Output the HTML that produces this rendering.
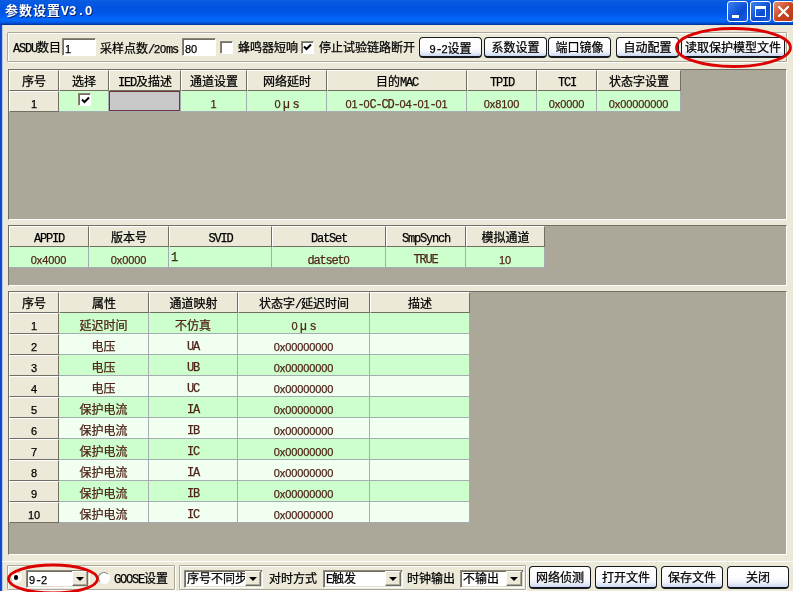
<!DOCTYPE html><html><head><meta charset="utf-8"><title>参数设置V3.0</title><style>
*{box-sizing:border-box;margin:0;padding:0}
html,body{width:793px;height:592px;overflow:hidden;background:#ECE9D8}
body{position:relative;font-family:"Liberation Mono","Noto Sans CJK SC",monospace;font-size:12px;line-height:14px;color:#000;-webkit-text-stroke:0.25px}
.l{letter-spacing:-1.2px}
.n{font-family:"Liberation Sans",sans-serif;font-size:11px;letter-spacing:-0.12px}
.mu{display:inline-block;width:12px;text-align:center;font-family:"Liberation Sans",sans-serif}
.abs{position:absolute}
#root{position:absolute;left:0;top:0;width:793px;height:592px;will-change:transform}
#title{left:0;top:0;width:793px;height:25px;background:linear-gradient(to bottom,#0D5FE0 0%,#0458E2 12%,#0054E3 30%,#0055E6 50%,#025EF3 65%,#0468FA 78%,#0462F2 86%,#0150D8 92%,#0140B4 96%,#012F8F 100%)}
#title .t{-webkit-text-stroke:0;left:5px;top:3px;color:#fff;font-weight:bold;font-size:13px;line-height:16px;letter-spacing:1px;white-space:nowrap;text-shadow:1px 1px 0 #0A246A}
#title .t .l{letter-spacing:0.2px}
#title .t .n{font-size:13px;letter-spacing:0.8px}
#lb{left:0;top:25px;width:3px;height:567px;background:linear-gradient(to right,#0A3FC4 0,#1650D8 1.6px,#9DB6E8 2.2px,#DDE3EA 3px)}
.tb{top:1px;width:21px;height:21px;border-radius:3px;border:1px solid #fff}
.gb{border:1px solid #ACA899;box-shadow:1px 1px 0 #fff, inset 1px 1px 0 #fff;border-radius:1px}
.inp{background:#fff;border:1px solid;border-color:#8A8778 #fff #fff #8A8778;box-shadow:inset 1px 1px 0 #716F64;padding:3px 0 0 2px;white-space:nowrap;overflow:hidden}
.inp3{background:#fff;border:1px solid;border-color:#8A8778 #fff #fff #8A8778;box-shadow:inset 1px 1px 0 #716F64, inset -1px -1px 0 #E0DDD0;padding:2px 0 0 2px;white-space:nowrap;overflow:hidden}
.btn{border:1px solid #15181C;border-bottom-width:2px;border-radius:4px;background:linear-gradient(to bottom,#fff 0%,#FDFDFE 55%,#EEF1FA 78%,#C9D6F2 100%);text-align:center;white-space:nowrap;line-height:19px}
.lab{white-space:nowrap}
.grid{background:#ACA899;border:1px solid;border-color:#716F64 #fff #fff #716F64;overflow:hidden}
.c{position:absolute;text-align:center;white-space:nowrap;overflow:hidden;line-height:20px;padding-top:2px}
.h{background:#ECE9D8;border:1px solid;border-color:#fff #716F64 #716F64 #fff;color:#000}
.d{border-right:1px solid #A5ACB2;border-bottom:1px solid #A5ACB2;color:#50241A;line-height:21px;padding-top:3px}
.d.k{padding-top:4px}
.o{background:#CCFFCC}
.e{background:#F0FFF0}
.dd{width:16px;background:#ECE9D8;border:1px solid;border-color:#fff #716F64 #716F64 #fff;box-shadow:inset -1px -1px 0 #ACA899}
.dd:after{content:"";position:absolute;left:2.5px;top:5px;border:4px solid transparent;border-top:4px solid #000;border-bottom:0}
.cb{width:13px;height:13px;background:#fff;border:1px solid;border-color:#8A8778 #fff #fff #8A8778;box-shadow:inset 1px 1px 0 #716F64}
</style></head><body><div id="root">
<div id="title" class="abs"><div class="abs t">参数设置<span class="l">V</span><span class="n">3</span><span class="l">.</span><span class="n">0</span></div>
<div class="abs tb" style="left:727px;background:linear-gradient(135deg,#3C82F0,#0A4BD2 60%,#1A5FE0)"><div class="abs" style="left:4px;top:13px;width:7px;height:3px;background:#fff"></div></div>
<div class="abs tb" style="left:750px;background:linear-gradient(135deg,#3C82F0,#0A4BD2 60%,#1A5FE0)"><div class="abs" style="left:4px;top:4px;width:11px;height:11px;border:1px solid #fff;border-top-width:3px"></div></div>
<div class="abs tb" style="left:773px;background:linear-gradient(135deg,#E89070,#C8421E 55%,#B83A18)"><svg class="abs" style="left:3px;top:3px" width="13" height="13" viewBox="0 0 13 13"><path d="M2 2 L11 11 M11 2 L2 11" stroke="#fff" stroke-width="2.2" stroke-linecap="round"/></svg></div>
</div>
<div id="lb" class="abs"></div>
<div class="abs gb" style="left:7px;top:32px;width:780px;height:30px"></div>
<div class="abs lab" style="left:13px;top:42px"><span class="l">ASDU</span>数目</div>
<div class="abs inp" style="left:62px;top:38px;width:34px;height:18px"><span class="n">1</span></div>
<div class="abs lab" style="left:100px;top:42px">采样点数<span class="l">/</span><span class="n">20</span><span class="l">ms</span></div>
<div class="abs inp" style="left:182px;top:38px;width:34px;height:18px"><span class="n">80</span></div>
<div class="abs cb" style="left:220px;top:41px"></div>
<div class="abs lab" style="left:238px;top:42px">蜂鸣器短响</div>
<div class="abs cb" style="left:301px;top:41px"><svg class="abs" style="left:1px;top:1px" width="9" height="9" viewBox="0 0 9 9"><path d="M1 3.5 L3.5 6 L8 1.5" stroke="#000" stroke-width="2" fill="none"/></svg></div>
<div class="abs lab" style="left:319px;top:42px">停止试验链路断开</div>
<div class="abs btn" style="left:419px;top:37px;width:63px;height:21px;line-height:23px"><span class="n">9</span><span class="l">-</span><span class="n">2</span>设置</div>
<div class="abs btn" style="left:484px;top:37px;width:63px;height:21px;line-height:23px">系数设置</div>
<div class="abs btn" style="left:548px;top:37px;width:63px;height:21px;line-height:23px">端口镜像</div>
<div class="abs btn" style="left:616px;top:37px;width:63px;height:21px;line-height:23px">自动配置</div>
<div class="abs btn" style="left:681px;top:37px;width:104px;height:21px;line-height:23px">读取保护模型文件</div>
<div class="abs grid" style="left:8px;top:69px;width:779px;height:151px">
<div class="c h" style="left:0px;top:0;width:50px;height:21px">序号</div>
<div class="c h" style="left:50px;top:0;width:50px;height:21px">选择</div>
<div class="c h" style="left:100px;top:0;width:72px;height:21px"><span class="l">IED</span>及描述</div>
<div class="c h" style="left:172px;top:0;width:66px;height:21px">通道设置</div>
<div class="c h" style="left:238px;top:0;width:80px;height:21px">网络延时</div>
<div class="c h" style="left:318px;top:0;width:140px;height:21px">目的<span class="l">MAC</span></div>
<div class="c h" style="left:458px;top:0;width:70px;height:21px"><span class="l">TPID</span></div>
<div class="c h" style="left:528px;top:0;width:60px;height:21px"><span class="l">TCI</span></div>
<div class="c h" style="left:588px;top:0;width:84px;height:21px">状态字设置</div>
<div class="c h" style="left:0px;top:21px;width:50px;height:21px"><span class="n">1</span></div>
<div class="c d o" style="left:50px;top:21px;width:50px;height:21px"><div class="abs cb" style="left:19px;top:2px"><svg class="abs" style="left:2px;top:2px" width="9" height="9" viewBox="0 0 9 9"><path d="M1 3.5 L3.5 6 L8 1.5" stroke="#000" stroke-width="2" fill="none"/></svg></div></div>
<div class="c d o" style="left:100px;top:21px;width:72px;height:21px"><div class="abs" style="left:0;top:0;right:0;bottom:0;background:#C8C8C8;border:1px solid #70363A"></div></div>
<div class="c d o" style="left:172px;top:21px;width:66px;height:21px"><span class="n">1</span></div>
<div class="c d o" style="left:238px;top:21px;width:80px;height:21px"><span class="n">0</span><span class="mu">μ</span><span class="l">s</span></div>
<div class="c d o" style="left:318px;top:21px;width:140px;height:21px"><span class="n">01</span><span class="l">-</span><span class="n">0</span><span class="l">C-CD-</span><span class="n">04</span><span class="l">-</span><span class="n">01</span><span class="l">-</span><span class="n">01</span></div>
<div class="c d o" style="left:458px;top:21px;width:70px;height:21px"><span class="n">0x8100</span></div>
<div class="c d o" style="left:528px;top:21px;width:60px;height:21px"><span class="n">0x0000</span></div>
<div class="c d o" style="left:588px;top:21px;width:84px;height:21px"><span class="n">0x00000000</span></div>
</div>
<div class="abs grid" style="left:8px;top:225px;width:779px;height:61px">
<div class="c h" style="left:0px;top:0;width:80px;height:21px"><span class="l">APPID</span></div>
<div class="c h" style="left:80px;top:0;width:80px;height:21px">版本号</div>
<div class="c h" style="left:160px;top:0;width:103px;height:21px"><span class="l">SVID</span></div>
<div class="c h" style="left:263px;top:0;width:114px;height:21px"><span class="l">DatSet</span></div>
<div class="c h" style="left:377px;top:0;width:80px;height:21px"><span class="l">SmpSynch</span></div>
<div class="c h" style="left:457px;top:0;width:79px;height:21px">模拟通道</div>
<div class="c d o" style="left:0px;top:21px;width:80px;height:21px"><span class="n">0x4000</span></div>
<div class="c d o" style="left:80px;top:21px;width:80px;height:21px"><span class="n">0x0000</span></div>
<div class="c d o" style="left:160px;top:21px;width:103px;height:21px"><div class="abs" style="left:2px;top:1px;color:#3A2A10"><span class="l">1</span></div></div>
<div class="c d o" style="left:263px;top:21px;width:114px;height:21px"><span class="l">datset</span><span class="n">0</span></div>
<div class="c d o" style="left:377px;top:21px;width:80px;height:21px"><span class="l">TRUE</span></div>
<div class="c d o" style="left:457px;top:21px;width:79px;height:21px"><span class="n">10</span></div>
</div>
<div class="abs grid" style="left:8px;top:291px;width:779px;height:264px">
<div class="c h" style="left:0px;top:0;width:50px;height:21px">序号</div>
<div class="c h" style="left:50px;top:0;width:90px;height:21px">属性</div>
<div class="c h" style="left:140px;top:0;width:89px;height:21px">通道映射</div>
<div class="c h" style="left:229px;top:0;width:132px;height:21px">状态字<span class="l">/</span>延迟时间</div>
<div class="c h" style="left:361px;top:0;width:100px;height:21px">描述</div>
<div class="c h" style="left:0px;top:21px;width:50px;height:21px"><span class="n">1</span></div>
<div class="c d o k" style="left:50px;top:21px;width:90px;height:21px">延迟时间</div>
<div class="c d o k" style="left:140px;top:21px;width:89px;height:21px">不仿真</div>
<div class="c d o" style="left:229px;top:21px;width:132px;height:21px"><span class="n">0</span><span class="mu">μ</span><span class="l">s</span></div>
<div class="c d o" style="left:361px;top:21px;width:100px;height:21px"></div>
<div class="c h" style="left:0px;top:42px;width:50px;height:21px"><span class="n">2</span></div>
<div class="c d e k" style="left:50px;top:42px;width:90px;height:21px">电压</div>
<div class="c d e" style="left:140px;top:42px;width:89px;height:21px"><span class="l">UA</span></div>
<div class="c d e" style="left:229px;top:42px;width:132px;height:21px"><span class="n">0x00000000</span></div>
<div class="c d e" style="left:361px;top:42px;width:100px;height:21px"></div>
<div class="c h" style="left:0px;top:63px;width:50px;height:21px"><span class="n">3</span></div>
<div class="c d o k" style="left:50px;top:63px;width:90px;height:21px">电压</div>
<div class="c d o" style="left:140px;top:63px;width:89px;height:21px"><span class="l">UB</span></div>
<div class="c d o" style="left:229px;top:63px;width:132px;height:21px"><span class="n">0x00000000</span></div>
<div class="c d o" style="left:361px;top:63px;width:100px;height:21px"></div>
<div class="c h" style="left:0px;top:84px;width:50px;height:21px"><span class="n">4</span></div>
<div class="c d e k" style="left:50px;top:84px;width:90px;height:21px">电压</div>
<div class="c d e" style="left:140px;top:84px;width:89px;height:21px"><span class="l">UC</span></div>
<div class="c d e" style="left:229px;top:84px;width:132px;height:21px"><span class="n">0x00000000</span></div>
<div class="c d e" style="left:361px;top:84px;width:100px;height:21px"></div>
<div class="c h" style="left:0px;top:105px;width:50px;height:21px"><span class="n">5</span></div>
<div class="c d o k" style="left:50px;top:105px;width:90px;height:21px">保护电流</div>
<div class="c d o" style="left:140px;top:105px;width:89px;height:21px"><span class="l">IA</span></div>
<div class="c d o" style="left:229px;top:105px;width:132px;height:21px"><span class="n">0x00000000</span></div>
<div class="c d o" style="left:361px;top:105px;width:100px;height:21px"></div>
<div class="c h" style="left:0px;top:126px;width:50px;height:21px"><span class="n">6</span></div>
<div class="c d e k" style="left:50px;top:126px;width:90px;height:21px">保护电流</div>
<div class="c d e" style="left:140px;top:126px;width:89px;height:21px"><span class="l">IB</span></div>
<div class="c d e" style="left:229px;top:126px;width:132px;height:21px"><span class="n">0x00000000</span></div>
<div class="c d e" style="left:361px;top:126px;width:100px;height:21px"></div>
<div class="c h" style="left:0px;top:147px;width:50px;height:21px"><span class="n">7</span></div>
<div class="c d o k" style="left:50px;top:147px;width:90px;height:21px">保护电流</div>
<div class="c d o" style="left:140px;top:147px;width:89px;height:21px"><span class="l">IC</span></div>
<div class="c d o" style="left:229px;top:147px;width:132px;height:21px"><span class="n">0x00000000</span></div>
<div class="c d o" style="left:361px;top:147px;width:100px;height:21px"></div>
<div class="c h" style="left:0px;top:168px;width:50px;height:21px"><span class="n">8</span></div>
<div class="c d e k" style="left:50px;top:168px;width:90px;height:21px">保护电流</div>
<div class="c d e" style="left:140px;top:168px;width:89px;height:21px"><span class="l">IA</span></div>
<div class="c d e" style="left:229px;top:168px;width:132px;height:21px"><span class="n">0x00000000</span></div>
<div class="c d e" style="left:361px;top:168px;width:100px;height:21px"></div>
<div class="c h" style="left:0px;top:189px;width:50px;height:21px"><span class="n">9</span></div>
<div class="c d o k" style="left:50px;top:189px;width:90px;height:21px">保护电流</div>
<div class="c d o" style="left:140px;top:189px;width:89px;height:21px"><span class="l">IB</span></div>
<div class="c d o" style="left:229px;top:189px;width:132px;height:21px"><span class="n">0x00000000</span></div>
<div class="c d o" style="left:361px;top:189px;width:100px;height:21px"></div>
<div class="c h" style="left:0px;top:210px;width:50px;height:21px"><span class="n">10</span></div>
<div class="c d e k" style="left:50px;top:210px;width:90px;height:21px">保护电流</div>
<div class="c d e" style="left:140px;top:210px;width:89px;height:21px"><span class="l">IC</span></div>
<div class="c d e" style="left:229px;top:210px;width:132px;height:21px"><span class="n">0x00000000</span></div>
<div class="c d e" style="left:361px;top:210px;width:100px;height:21px"></div>
</div>
<div class="abs gb" style="left:7px;top:565px;width:168px;height:25px"></div>
<div class="abs gb" style="left:179px;top:565px;width:347px;height:25px"></div>
<div class="abs" style="left:10px;top:571px;width:12px;height:12px;border-radius:50%;background:#F8F7F2;border:1px solid;border-color:#B0AD9E #fff #fff #B0AD9E"></div>
<div class="abs" style="left:13.5px;top:575px;width:4.5px;height:4.5px;border-radius:50%;background:#000"></div>
<div class="abs" style="left:2px;top:561px;width:791px;height:1px;background:#fff"></div>
<div class="abs inp3" style="left:26px;top:570px;width:64px;height:18px"><span class="n">9</span><span class="l">-</span><span class="n">2</span><div class="abs dd" style="right:1px;top:0px;height:15px"></div></div>
<div class="abs" style="left:98px;top:572px;width:12px;height:12px;border-radius:50%;background:#fff;border:1px solid;border-color:#808080 #fff #fff #808080"></div>
<div class="abs lab" style="left:114px;top:573px"><span class="l">GOOSE</span>设置</div>
<div class="abs inp3" style="left:184px;top:570px;width:79px;height:18px">序号不同步<div class="abs dd" style="right:1px;top:0px;height:15px"></div></div>
<div class="abs lab" style="left:269px;top:573px">对时方式</div>
<div class="abs inp3" style="left:323px;top:570px;width:80px;height:18px"><span class="l">E</span>触发<div class="abs dd" style="right:1px;top:0px;height:15px"></div></div>
<div class="abs lab" style="left:407px;top:573px">时钟输出</div>
<div class="abs inp3" style="left:460px;top:570px;width:64px;height:18px">不输出<div class="abs dd" style="right:1px;top:0px;height:15px"></div></div>
<div class="abs btn" style="left:529px;top:566px;width:62px;height:23px;line-height:25px">网络侦测</div>
<div class="abs btn" style="left:595px;top:566px;width:62px;height:23px;line-height:25px">打开文件</div>
<div class="abs btn" style="left:661px;top:566px;width:62px;height:23px;line-height:25px">保存文件</div>
<div class="abs btn" style="left:727px;top:566px;width:62px;height:23px;line-height:25px">关闭</div>
<div class="abs" style="left:0;top:591px;width:793px;height:1px;background:#fff"></div>
<svg class="abs" style="left:0;top:0" width="793" height="592" viewBox="0 0 793 592"><ellipse cx="733.5" cy="47.5" rx="57" ry="19" fill="none" stroke="#DD0000" stroke-width="2.8"/><ellipse cx="53" cy="579" rx="44.5" ry="14" fill="none" stroke="#DD0000" stroke-width="2.8"/></svg>
</div></body></html>
